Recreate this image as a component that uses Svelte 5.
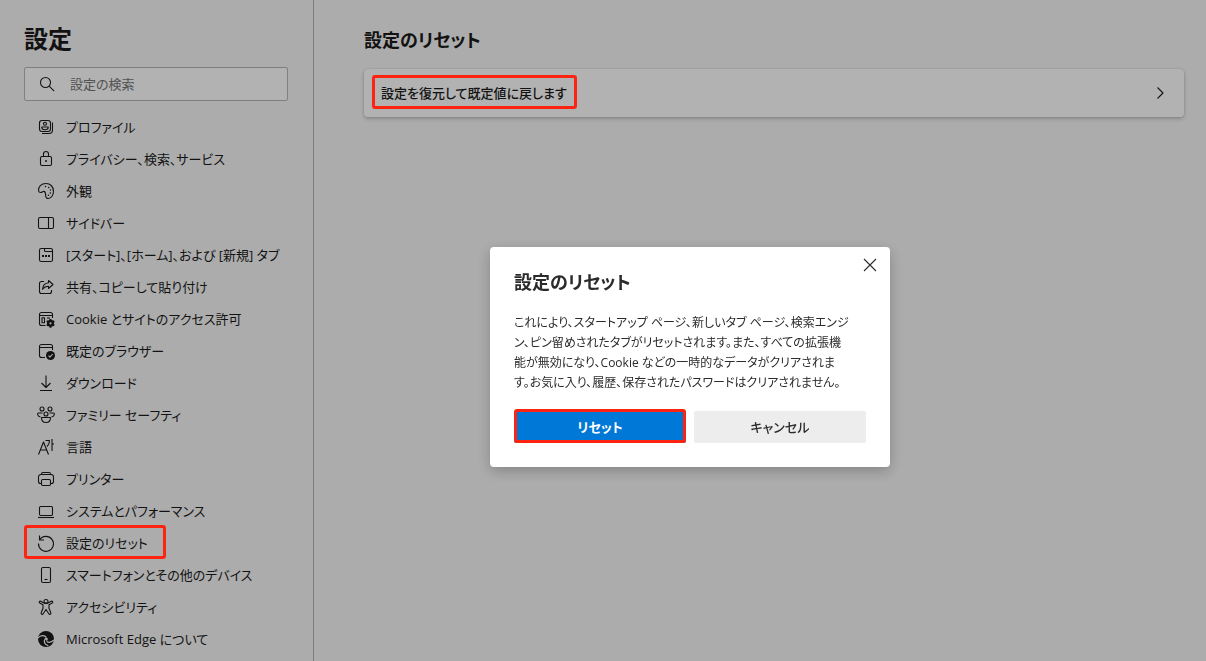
<script lang="ts">
    const items = [
        { icon: "profile", label: "プロファイル" },
        { icon: "lock", label: "プライバシー、検索、サービス" },
        { icon: "palette", label: "外観" },
        { icon: "sidebar", label: "サイドバー" },
        { icon: "start", label: "[スタート]、[ホーム]、および [新規] タブ" },
        { icon: "share", label: "共有、コピーして貼り付け" },
        { icon: "cookie", label: "Cookie とサイトのアクセス許可" },
        { icon: "browser", label: "既定のブラウザー" },
        { icon: "download", label: "ダウンロード" },
        { icon: "family", label: "ファミリー セーフティ" },
        { icon: "language", label: "言語" },
        { icon: "printer", label: "プリンター" },
        { icon: "system", label: "システムとパフォーマンス" },
        { icon: "reset", label: "設定のリセット" },
        { icon: "phone", label: "スマートフォンとその他のデバイス" },
        { icon: "accessibility", label: "アクセシビリティ" },
        { icon: "edge", label: "Microsoft Edge について" },
    ];

    let open = $state(true);
    let query = $state("");
</script>

{#snippet navIcon(name: string)}
    <svg class="icon" viewBox="0 0 20 20" aria-hidden="true">
        {#if name === "profile"}
            <rect x="3.5" y="3.5" width="11" height="11" rx="2.5" />
            <circle cx="9" cy="6.8" r="1.5" />
            <path d="M5.8 10h6.4v.6c0 1.4-1.6 2.1-3.2 2.1s-3.2-.7-3.2-2.1z" />
            <path d="M16.5 5.5v7.5a3.5 3.5 0 0 1-3.5 3.5H6" />
        {:else if name === "lock"}
            <rect x="4.5" y="7.5" width="11" height="9" rx="1.5" />
            <path d="M7.5 7.5V5a2.5 2.5 0 0 1 5 0v2.5" />
            <circle class="solid" cx="10" cy="12" r="1" />
        {:else if name === "palette"}
            <path d="M2.6 9.8C2 6 5.2 2.5 10 2.5c4.5 0 7.5 3.5 7.5 7.5 0 4-2.2 7.5-5.2 7.5-2.2 0-2.7-1.8-2.7-3.6 0-2.2-.3-3.5-1.8-3.5-1.3 0-2 1.1-3.2 1.1-1 0-1.800-.7-2-1.700z" />
            <circle class="solid" cx="9.5" cy="5.5" r=".8" />
            <circle class="solid" cx="12.7" cy="6.5" r=".8" />
            <circle class="solid" cx="14.5" cy="9" r=".8" />
            <circle class="solid" cx="14.3" cy="12" r=".8" />
            <circle class="solid" cx="12.4" cy="14.3" r=".8" />
        {:else if name === "sidebar"}
            <rect x="2.5" y="4.5" width="15" height="11" rx="1.5" />
            <path d="M12.5 4.5v11" />
        {:else if name === "start"}
            <rect x="3.5" y="3.5" width="13" height="13" rx="1.8" />
            <path d="M8.5 3.5v2a1 1 0 0 0 1 1h7" />
            <path class="dots" d="M6 11h2M9 11h2M12 11h2" />
        {:else if name === "share"}
            <path d="M8 4.5H5.5a2 2 0 0 0-2 2v8a2 2 0 0 0 2 2h8a2 2 0 0 0 2-2v-1.500" />
            <path d="M12.5 3.500 17 7.500l-4.500 4V9.300c-2.700 0-4.500.9-6 3 .3-3.500 2.300-6.300 6-6.600z" />
        {:else if name === "cookie"}
            <path d="M9.5 16.5h-4a2 2 0 0 1-2-2v-9a2 2 0 0 1 2-2h9a2 2 0 0 1 2 2V9M3.5 6.500h13" />
            <rect x="6" y="8.8" width="2.5" height="5" />
            <path d="M11 9h3" />
            <circle class="gear" cx="14.5" cy="14.3" r="3.5" />
            <path class="teeth" d="M14.5 9.900v8.800M10.700 12.100l7.600 4.400M10.700 16.500l7.600-4.400" />
            <circle class="hole" cx="14.5" cy="14.3" r="1.1" />
        {:else if name === "browser"}
            <path d="M9 16.5H5.5a2 2 0 0 1-2-2v-9a2 2 0 0 1 2-2h9a2 2 0 0 1 2 2V9M3.5 6.500h13" />
            <circle class="solid" cx="14.5" cy="14.5" r="4.5" />
            <path class="check" d="m12.5 14.7 1.4 1.4 2.7-3" />
        {:else if name === "download"}
            <path d="M10 2.5v12M5.5 10l4.5 4.5 4.5-4.500M4 17.500h12" />
        {:else if name === "family"}
            <circle cx="6" cy="4" r="2" />
            <circle cx="14" cy="4" r="2" />
            <circle cx="10" cy="9" r="2" />
            <path d="M6.5 8H2.500c-1.500 0-1 3.500 2 4M13.500 8h4c1.500 0 1 3.500-2 4M5.500 12.500h9c0 3-1.800 5-4.500 5s-4.500-2-4.500-5z" />
        {:else if name === "language"}
            <path d="M2.5 17.500 7.500 5l5 12.500M4.200 13h6.600M9.500 3.500h4c0 2.500-.8 4.500-2.500 6M16 2v12M16 7h2" />
        {:else if name === "printer"}
            <path d="M5.5 5.500V5A1.500 1.500 0 0 1 7 3.500h6A1.500 1.500 0 0 1 14.500 5v.5" />
            <path d="M5.5 14.500h-1a2 2 0 0 1-2-2V8A2.500 2.500 0 0 1 5 5.500h10A2.500 2.500 0 0 1 17.500 8v4.500a2 2 0 0 1-2 2h-1" />
            <rect x="5.5" y="10.5" width="9" height="6" rx="1.2" />
        {:else if name === "system"}
            <rect x="3.5" y="5.5" width="13" height="9" rx="1.2" />
            <path d="M2 16.500h16" />
        {:else if name === "reset"}
            <path d="M3.5 2.500v4.500H8" />
            <path d="M3.7 6.800A7.500 7.500 0 1 1 2.500 10.500" />
        {:else if name === "phone"}
            <rect x="5.5" y="2.5" width="9" height="15" rx="1.5" />
            <path d="M8.5 14.500h3" />
        {:else if name === "accessibility"}
            <circle cx="10" cy="4.5" r="2" />
            <path d="M8 6 4.800 4.300c-1.300-.6-2.200 1-1 1.700L7 7.800v3.500l-1.800 4.500c-.5 1.500 1.300 2.200 2 .9L10 12.500l2.800 4.200c.7 1.300 2.500.6 2-.9L13 11.300V7.800L16.200 6c1.200-.7.300-2.300-1-1.700L12 6z" />
        {:else if name === "edge"}
            <circle class="solid" cx="10" cy="10" r="8" />
            <path class="swirl" d="M1.5 9.500C4 6 8.500 5.800 10.300 8.400M9.300 9.500c-2.200 3-.5 6.600 3 7.200M10.500 12.500c2.600 1.500 5.200.7 7.500-1.500" />
            <path class="eye" d="M9.200 8.800c1.300-.8 2.800.2 2.600 1.400-.1.700-.7 1-.5 1.800-1.600-.3-2.600-1.800-2.100-3.200z" />
        {/if}
    </svg>
{/snippet}

<div class="settings">
    <aside class="sidebar">
        <h1>設定</h1>
        <label class="search">
            <svg class="icon" viewBox="0 0 20 20" aria-hidden="true">
                <circle cx="8.5" cy="8.5" r="5" />
                <path d="m12.2 12.2 5 5" />
            </svg>
            <input type="text" placeholder="設定の検索" aria-label="設定の検索" bind:value={query} />
        </label>
        <nav>
            {#each items as item}
                <a
                    href={"#" + item.icon}
                    class="nav-item"
                    class:marked={item.icon === "reset"}
                >
                    {@render navIcon(item.icon)}
                    <span>{item.label}</span>
                </a>
            {/each}
        </nav>
    </aside>

    <main class="content">
        <h2>設定のリセット</h2>
        <button class="card" onclick={() => (open = true)}>
            <span class="card-label marked">設定を復元して既定値に戻します</span>
            <svg class="icon" viewBox="0 0 20 20" aria-hidden="true">
                <path d="m7.5 4.500 5.500 5.500-5.500 5.500" />
            </svg>
        </button>
    </main>
</div>

{#if open}
    <div class="scrim">
        <div class="dialog" role="dialog" aria-modal="true" aria-labelledby="dialog-title">
            <button class="close" aria-label="閉じる" onclick={() => (open = false)}>
                <svg class="icon" viewBox="0 0 20 20" aria-hidden="true">
                    <path d="m4 4 12 12M16 4 4 16" />
                </svg>
            </button>
            <h2 id="dialog-title">設定のリセット</h2>
            <p>
                これにより、スタートアップ ページ、新しいタブ ページ、検索エンジ<br
                />ン、ピン留めされたタブがリセットされます。また、すべての拡張機<br
                />能が無効になり、Cookie などの一時的なデータがクリアされま<br
                />す。お気に入り、履歴、保存されたパスワードはクリアされません。
            </p>
            <div class="actions">
                <button class="primary marked" onclick={() => (open = false)}>リセット</button>
                <button onclick={() => (open = false)}>キャンセル</button>
            </div>
        </div>
    </div>
{/if}

<style>
    :global(body) {
        background: #f7f7f7;
        color: #1b1b1b;
        font-family: "Open Sans", "Noto Sans CJK JP", sans-serif;
        font-size: 13px;
        line-height: 20px;
        font-feature-settings: "palt";
    }
    button,
    input {
        font: inherit;
        font-feature-settings: inherit;
        color: inherit;
        border: 0;
        padding: 0;
    }
    h1,
    h2,
    p {
        margin: 0;
    }
    .settings {
        display: flex;
        min-height: 100vh;
    }
    .sidebar {
        box-sizing: border-box;
        flex: none;
        width: 314px;
        padding: 24px 25px 0 24px;
        border-right: 1px solid #b5b5b5;
    }
    h1 {
        font-size: 24px;
        line-height: 30px;
        font-weight: 600;
    }
    .search {
        display: flex;
        align-items: center;
        box-sizing: border-box;
        height: 34px;
        margin: 13px 0 10px;
        padding: 0 12px;
        gap: 13px;
        background: #fff;
        border: 1px solid #b8b8b8;
        border-radius: 2px;
    }
    .search input {
        flex: 1;
        min-width: 0;
        background: none;
        outline: none;
    }
    .search input::placeholder {
        color: #767676;
        opacity: 1;
    }
    .icon {
        flex: none;
        width: 20px;
        height: 20px;
        fill: none;
        stroke: currentColor;
        stroke-width: 1.1;
        stroke-linejoin: round;
    }
    .icon .solid,
    .icon .gear {
        fill: currentColor;
        stroke: none;
    }
    .icon .dots {
        stroke-width: 2;
    }
    .icon .teeth {
        stroke-width: 2;
    }
    .icon .hole,
    .icon .eye {
        fill: #f7f7f7;
        stroke: none;
    }
    .icon .check {
        stroke: #f7f7f7;
    }
    .icon .swirl {
        stroke: #f7f7f7;
        stroke-width: 1.2;
    }
    nav {
        display: flex;
        flex-direction: column;
        align-items: flex-start;
    }
    .nav-item {
        display: flex;
        align-items: center;
        gap: 10px;
        height: 32px;
        padding-left: 12px;
        color: inherit;
        text-decoration: none;
        white-space: nowrap;
    }
    .nav-item.marked {
        padding-right: 18px;
    }
    .content {
        flex: 1;
        min-width: 0;
        padding: 29px 22px 0 50px;
    }
    h2 {
        font-size: 18px;
        line-height: 22px;
        font-weight: 600;
    }
    .card {
        display: flex;
        align-items: center;
        justify-content: space-between;
        width: 100%;
        height: 48px;
        margin-top: 18px;
        padding: 0 14px 0 8px;
        background: #fff;
        border-radius: 4px;
        box-shadow:
            0 0 2px rgba(0, 0, 0, 0.15),
            0 2px 4px rgba(0, 0, 0, 0.2);
    }
    .card-label {
        padding: 6px 10px 6px 9px;
        font-weight: 500;
    }

    /* red call-out frame, drawn above the scrim */
    .marked {
        position: relative;
    }
    .marked::after {
        content: "";
        position: absolute;
        inset: -2px 0 0;
        z-index: 2;
        border: 3px solid #ff2412;
        border-radius: 3px;
        pointer-events: none;
    }

    .scrim {
        position: fixed;
        inset: 0;
        z-index: 1;
        display: flex;
        align-items: center;
        justify-content: center;
        padding: 53px 0 0 174px;
        background: rgba(0, 0, 0, 0.3);
    }
    .dialog {
        position: relative;
        box-sizing: border-box;
        width: 400px;
        padding: 24px;
        color: #2b2b2b;
        background: #fff;
        border-radius: 4px;
        box-shadow: 0 4px 14px rgba(0, 0, 0, 0.24);
    }
    .dialog p {
        margin: 20px 0 18px;
        font-size: 12px;
        white-space: nowrap;
    }
    .close {
        position: absolute;
        top: 2px;
        right: 4px;
        display: grid;
        place-items: center;
        width: 32px;
        height: 32px;
        background: none;
    }
    .actions {
        display: flex;
        gap: 8px;
    }
    .actions button {
        flex: 1;
        height: 32px;
        background: #ededed;
        border-radius: 2px;
        font-weight: 500;
    }
    .actions .primary {
        color: #fff;
        background: #0078d7;
        font-weight: 600;
    }
</style>
